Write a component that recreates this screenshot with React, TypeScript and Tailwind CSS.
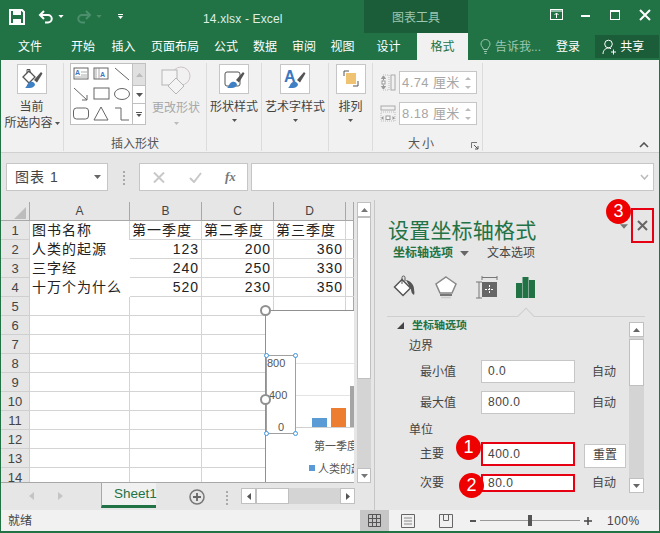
import React from "react";

function Save() {
  return (
    <svg width="16" height="16" viewBox="0 0 16 16">
      <path d="M1 1h12l2 2v12H1z" fill="none" stroke="#fff" strokeWidth="2" />
      <rect x="4" y="1" width="8" height="5" fill="#fff" />
      <rect x="4" y="10" width="8" height="5" fill="#fff" />
    </svg>
  );
}
function Undo({ c }: { c: string }) {
  return (
    <svg width="16" height="14" viewBox="0 0 16 14">
      <path d="M3 5h7a3.6 3.6 0 0 1 0 7.5H7" fill="none" stroke={c} strokeWidth="2" />
      <path d="M6 1L2 5l4 4" fill="none" stroke={c} strokeWidth="2" />
    </svg>
  );
}
function Redo({ c }: { c: string }) {
  return (
    <svg width="16" height="14" viewBox="0 0 16 14">
      <path d="M13 5H6a3.6 3.6 0 0 0 0 7.5h3" fill="none" stroke={c} strokeWidth="2" />
      <path d="M10 1l4 4-4 4" fill="none" stroke={c} strokeWidth="2" />
    </svg>
  );
}
function Caret({ c = "#555", w = 7 }: { c?: string; w?: number }) {
  return (
    <svg width={w} height={Math.round((w * 4) / 7)} viewBox="0 0 7 4" className="shrink-0">
      <path d="M0 0h7L3.5 4z" fill={c} />
    </svg>
  );
}
function Brush() {
  return (
    <g>
      <path d="M14 13l7-8 1.500 1.500-5.500 9z" fill="#555" />
      <path d="M5 21c2-1 2-5 5-6 3-1 5 1 5 3-1 2-3 3-5 3z" fill="#3f7fc4" />
    </g>
  );
}
function BigButton({ children }: { children: React.ReactNode }) {
  return (
    <div className="w-[30px] h-[30px] bg-white border border-[#c6c6c6] flex items-center justify-center">
      <svg width="24" height="24" viewBox="0 0 24 24">
        {children}
      </svg>
    </div>
  );
}

const shapeIcons = [
  <g key="a"><rect x="2" y="3" width="14" height="11" fill="none" stroke="#666" /><text x="3" y="10" fontSize="7" fill="#3a78c0" fontFamily="Liberation Sans" fontWeight="bold">A</text><path d="M9 7h6M9 10h6M3 12h12" stroke="#888" strokeWidth="0.7" /></g>,
  <g key="b"><rect x="2" y="3" width="14" height="11" fill="none" stroke="#666" /><text x="8" y="12" fontSize="7" fill="#3a78c0" fontFamily="Liberation Sans" fontWeight="bold">A</text><path d="M4 3v11M7 3v11" stroke="#888" strokeWidth="0.7" /></g>,
  <path key="c" d="M2 3l14 12" stroke="#666" fill="none" />,
  <g key="d"><path d="M2 3l13 12" stroke="#666" fill="none" /><path d="M15 10v5h-5" stroke="#666" fill="none" /></g>,
  <rect key="e" x="2" y="3" width="15" height="11" fill="none" stroke="#666" />,
  <ellipse key="f" cx="9" cy="9" rx="7.5" ry="5.5" fill="none" stroke="#666" />,
  <rect key="g" x="1.5" y="3" width="15" height="11" rx="3" fill="none" stroke="#666" />,
  <path key="h" d="M9 2l7 13H2z" fill="none" stroke="#666" />,
  <path key="i" d="M2 3h6v12h8" fill="none" stroke="#666" />,
];

const Tab = ({ w, t }: { w: string; t: string }) => (
  <div className={`${w} shrink-0 text-center`}>{t}</div>
);

function Spin({ text }: { text: string }) {
  return (
    <div className="w-[78px] h-[23px] bg-white border border-[#c6c6c6] flex items-center pl-[2px] text-[13px] tracking-[0.4px] text-[#a6a6a6]">
      <span className="flex-1 whitespace-nowrap">{text}</span>
      <div className="flex flex-col gap-[6px] mr-[5px]">
        <svg width="6" height="3"><path d="M0 3h6L3 0z" fill="#bbb" /></svg>
        <svg width="6" height="3"><path d="M0 0h6L3 3z" fill="#bbb" /></svg>
      </div>
    </div>
  );
}

const rowData: Record<number, string[]> = {
  1: ["图书名称", "第一季度", "第二季度", "第三季度"],
  2: ["人类的起源", "123", "200", "360"],
  3: ["三字经", "240", "250", "330"],
  4: ["十万个为什么", "520", "230", "350"],
};
const rows = Array.from({ length: 14 }, (_, i) => i + 1);

function Badge({ n, cls }: { n: string; cls: string }) {
  return (
    <div className={`absolute w-[25px] h-[25px] rounded-full bg-[#ee0000] text-white text-[18px] flex items-center justify-center ${cls}`}>
      {n}
    </div>
  );
}

function Handle({ cls }: { cls: string }) {
  return <div className={`absolute w-[5px] h-[5px] rounded-full bg-white border border-[#3d95e0] ${cls}`} />;
}

function PanelField({ label, value, right }: { label: string; value: string; right: string }) {
  return (
    <div className="flex items-center h-[23px] mb-[8px]">
      <div className="w-[72px] pl-[11px] text-[12px] text-[#444]">{label}</div>
      <div className="w-[94px] h-[23px] bg-white border border-[#c6c6c6] pl-[6px] text-[12px] tracking-[0.5px] text-[#444] leading-[20px]">{value}</div>
      <div className="ml-[17px] text-[12px] text-[#444]">{right}</div>
    </div>
  );
}

export default function App() {
  return (
    <div className="w-[660px] h-[533px] overflow-hidden relative flex flex-col bg-[#e6e6e6] border-x border-b-2 border-[#217346] font-['Liberation_Sans','Noto_Sans_CJK_SC',sans-serif] text-[#333]">
      {/* title bar */}
      <div className="h-[33px] shrink-0 bg-[#217346] flex text-white -mx-px">
        <div className="w-[364px] shrink-0 flex items-center pl-[9px] relative">
          <Save />
          <div className="ml-[13px]"><Undo c="#fff" /></div>
          <div className="ml-[4px]"><Caret c="#fff" w={6} /></div>
          <div className="ml-[12px]"><Redo c="#4b8f6c" /></div>
          <div className="ml-[4px]"><Caret c="#4b8f6c" w={6} /></div>
          <div className="ml-[16px] flex flex-col items-center gap-[1px]">
            <div className="w-[5px] h-px bg-white" />
            <Caret c="#fff" w={5} />
          </div>
          <div className="ml-[80px] mt-[4px] text-[12px] tracking-[0.15px] text-[#dfeee6] whitespace-nowrap">14.xlsx - Excel</div>
        </div>
        <div className="w-[104px] shrink-0 bg-[#1b5c39] text-center text-[12px] leading-[36px] text-[#9cc7b0]">图表工具</div>
        <div className="flex-1 flex items-center pl-[82px] gap-[18px] pb-[4px]">
          <svg width="13" height="11" viewBox="0 0 13 11"><rect x=".5" y=".5" width="12" height="10" fill="none" stroke="#fff" /><path d="M1 2h11" stroke="#fff" /><path d="M6.5 9V4M4.5 6l2-2 2 2" stroke="#fff" fill="none" /></svg>
          <div className="w-[9px] h-[2px] bg-white mt-[3px]" />
          <div className="w-[10px] h-[10px] border border-white border-t-2 ml-[2px]" />
          <svg width="12" height="12" viewBox="0 0 12 12" className="ml-px"><path d="M1 1l10 10M11 1L1 11" stroke="#fff" strokeWidth="2" /></svg>
        </div>
      </div>

      {/* tabs */}
      <div className="h-[27px] shrink-0 bg-[#217346] flex items-center text-[12px] text-white -mx-px">
        <Tab w="w-[60px]" t="文件" />
        <Tab w="w-[46px]" t="开始" />
        <Tab w="w-[35px]" t="插入" />
        <Tab w="w-[68px]" t="页面布局" />
        <Tab w="w-[34px]" t="公式" />
        <Tab w="w-[44px]" t="数据" />
        <Tab w="w-[34px]" t="审阅" />
        <Tab w="w-[43px]" t="视图" />
        <Tab w="w-[49px]" t="设计" />
        <div className="w-[51px] h-[27px] shrink-0 bg-[#f1f1f1] text-center leading-[28px] text-[#217346] ml-[4px]">格式</div>
        <div className="ml-[12px] flex items-center gap-[4px] text-[#9cc7b0] whitespace-nowrap w-[76px]">
          <svg width="11" height="15" viewBox="0 0 11 15"><path d="M3.5 10.5C3 8 1 7.500 1 5a4.500 4.500 0 0 1 9 0c0 2.500-2 3-2.500 5.500z" fill="none" stroke="#9cc7b0" /><path d="M4 12.500h3M4.500 14.500h2" stroke="#9cc7b0" /></svg>
          <span>告诉我...</span>
        </div>
        <div className="ml-[-1px] w-[36px] text-center">登录</div>
        <div className="ml-[10px] w-[68px] h-[23px] bg-[#1b5c39] flex items-center pl-[7px] gap-[3px]">
          <svg width="15" height="16" viewBox="0 0 15 16"><circle cx="6.500" cy="5" r="3.800" fill="none" stroke="#fff" /><path d="M1 15c0-3 2-6 5.500-6 1 0 1.500.2 2.500.7" fill="none" stroke="#fff" /><path d="M9 13h5M11.500 10.500v5" stroke="#fff" /></svg>
          <span>共享</span>
        </div>
      </div>

      {/* ribbon */}
      <div className="h-[93px] shrink-0 bg-[#f1f1f1] flex relative border-b border-[#d0d0d0] text-[12px] leading-[16px] text-[#444] -mx-px">
        <div className="w-[64px] shrink-0 h-[88px] mt-[3px] border-r border-[#dcdcdc] flex flex-col items-center pt-px">
          <BigButton>
            <path d="M3 10l6-6 6 6-6 6z" fill="#fff" stroke="#555" strokeWidth="1.300" />
            <path d="M7 6V2.500h3V6" fill="none" stroke="#555" />
            <Brush />
          </BigButton>
          <div className="mt-[5px]">当前</div>
          <div className="whitespace-nowrap flex items-center gap-[2px] ml-[1px]">所选内容<Caret w={5} /></div>
        </div>

        <div className="w-[143px] shrink-0 h-[88px] mt-[3px] border-r border-[#dcdcdc] flex flex-col">
          <div className="flex h-[63px]">
            <div className="ml-[6px] w-[76px] h-[62px] bg-white border border-[#c0c0c0] flex">
              <div className="w-[61px] grid grid-cols-3 justify-items-center items-center">
                {shapeIcons.map((s, i) => (
                  <svg key={i} width="18" height="18" viewBox="0 0 18 18">{s}</svg>
                ))}
              </div>
              <div className="flex-1 flex flex-col border-l border-[#c0c0c0]">
                <div className="h-[21px] bg-[#e0e0e0] flex items-center justify-center"><svg width="7" height="4"><path d="M0 4h7L3.500 0z" fill="#bbb" /></svg></div>
                <div className="h-[19px] border-y border-[#c0c0c0] flex items-center justify-center"><Caret /></div>
                <div className="flex-1 flex flex-col items-center justify-center gap-px"><div className="w-[6px] h-px bg-[#555]" /><Caret w={6} /></div>
              </div>
            </div>
            <div className="ml-[7px] mt-[2px] w-[46px] flex flex-col items-center text-[#a8a8a8] whitespace-nowrap">
              <svg width="32" height="31" viewBox="0 0 32 31">
                <circle cx="21" cy="11" r="9" fill="none" stroke="#d0c4c4" />
                <rect x="2" y="5" width="15" height="15" fill="#f4f4f4" stroke="#b5b5b5" />
                <path d="M16 13l8 8-8 8-8-8z" fill="#f4f4f4" stroke="#b5b5b5" />
              </svg>
              <div className="mt-[4px]">更改形状</div>
              <div className="mt-[6px]"><Caret c="#bbb" w={5} /></div>
            </div>
          </div>
          <div className="mt-[11px] text-center text-[#555]">插入形状</div>
        </div>

        <div className="w-[55px] shrink-0 h-[88px] mt-[3px] border-r border-[#dcdcdc] flex flex-col items-center pt-px">
          <BigButton>
            <rect x="3" y="5" width="15" height="14" rx="2" fill="#fff" stroke="#555" />
            <Brush />
          </BigButton>
          <div className="mt-[5px] whitespace-nowrap">形状样式</div>
          <div className="mt-[4px]"><Caret w={5} /></div>
        </div>

        <div className="w-[67px] shrink-0 h-[88px] mt-[3px] border-r border-[#dcdcdc] flex flex-col items-center pt-px">
          <BigButton>
            <text x="1" y="15" fontSize="16" fontWeight="bold" fill="#3a78c0" fontFamily="Liberation Sans">A</text>
            <Brush />
          </BigButton>
          <div className="mt-[5px] whitespace-nowrap">艺术字样式</div>
          <div className="mt-[4px]"><Caret w={5} /></div>
        </div>

        <div className="w-[44px] shrink-0 h-[88px] mt-[3px] border-r border-[#dcdcdc] flex flex-col items-center pt-px">
          <BigButton>
            <path d="M5 9V4h5M19 14v5h-5" fill="none" stroke="#555" />
            <rect x="7" y="6" width="10" height="11" fill="#f0c373" />
          </BigButton>
          <div className="mt-[5px]">排列</div>
          <div className="mt-[4px]"><Caret w={5} /></div>
        </div>

        <div className="w-[110px] shrink-0 h-[88px] mt-[3px] border-r border-[#dcdcdc] flex flex-col relative">
          <div className="flex items-center mt-[8px] gap-[3px] pl-[7px]">
            <svg width="16" height="17" viewBox="0 0 16 17">
              <rect x="11" y="1" width="4" height="15" fill="none" stroke="#aaa" />
              <rect x="3" y="1" width="6" height="15" fill="none" stroke="#bbb" strokeDasharray="1 1" />
              <path d="M3.500 6V3M1.500 4.500L3.500 2l2 2.500zM3.500 11v3M1.500 12.500l2 2.500 2-2.500z" fill="#999" stroke="#999" />
              <rect x="2" y="7" width="3" height="3" fill="#fff" stroke="#999" />
            </svg>
            <Spin text="4.74 厘米" />
          </div>
          <div className="flex items-center mt-[8px] gap-[3px] pl-[7px]">
            <svg width="16" height="17" viewBox="0 0 16 17">
              <rect x="1" y="1" width="14" height="4" fill="none" stroke="#aaa" />
              <rect x="1" y="7" width="14" height="9" fill="none" stroke="#bbb" strokeDasharray="1 1" />
              <path d="M1 13l2.500-2v4zM15 13l-2.500-2v4z" fill="#999" />
              <rect x="6" y="11" width="4" height="3.500" fill="#fff" stroke="#999" />
            </svg>
            <Spin text="8.18 厘米" />
          </div>
          <div className="mt-[11px] pl-[35px] text-[#555] tracking-[2px]">大小</div>
          <svg width="8" height="8" viewBox="0 0 8 8" className="absolute left-[98px] top-[79px]"><path d="M.5 6V.5H6" fill="none" stroke="#777" /><path d="M3 3l4 4M7 4v3H4" fill="none" stroke="#555" /></svg>
        </div>

        <svg width="10" height="6" viewBox="0 0 10 6" className="absolute left-[639px] top-[82px]"><path d="M1 5l4-4 4 4" fill="none" stroke="#555" strokeWidth="1.600" /></svg>
      </div>

      {/* formula bar */}
      <div className="h-[47px] shrink-0 bg-[#e6e6e6] flex items-start pt-[10px] -mx-px">
        <div className="ml-[6px] w-[102px] h-[28px] bg-white border border-[#c6c6c6] flex items-center pl-[8px] pr-[6px] text-[14px] tracking-[1px] text-[#444]">
          <span className="flex-1">图表 1</span>
          <Caret c="#666" />
        </div>
        <div className="ml-[15px] mt-[8px] flex flex-col gap-[2px]">
          <div className="w-[2px] h-[2px] bg-[#aaa]" />
          <div className="w-[2px] h-[2px] bg-[#aaa]" />
          <div className="w-[2px] h-[2px] bg-[#aaa]" />
          <div className="w-[2px] h-[2px] bg-[#aaa]" />
        </div>
        <div className="ml-[14px] w-[109px] h-[28px] bg-white border border-[#c6c6c6] flex items-center pl-[13px] gap-[24px]">
          <svg width="12" height="11" viewBox="0 0 12 11"><path d="M1 .5l10 10M11 .5l-10 10" stroke="#c8c8c8" strokeWidth="2" /></svg>
          <svg width="13" height="11" viewBox="0 0 13 11"><path d="M1 6l4 4 7-9" fill="none" stroke="#c8c8c8" strokeWidth="2" /></svg>
          <span className="font-['Liberation_Serif',serif] italic font-bold text-[13px] text-[#777] -ml-[1px]">fx</span>
        </div>
        <div className="ml-[3px] w-[403px] h-[28px] bg-white border border-[#c6c6c6] flex items-center justify-end pr-[4px]">
          <svg width="9" height="6" viewBox="0 0 9 6"><path d="M1 1l3.500 4L8 1" fill="none" stroke="#bbb" strokeWidth="1.500" /></svg>
        </div>
      </div>

      {/* main */}
      <div className="flex-1 min-h-0 flex -mr-px">
        <div className="w-[373px] shrink-0 flex flex-col relative">
          <div className="flex h-[283px] pt-[2px]">
            {/* sheet */}
            <div className="w-[353px] h-[281px] overflow-hidden relative border-b border-[#a8a8a8]">
              <div className="grid grid-cols-[29px_100px_72px_72px_72px_8px] grid-rows-[19px] auto-rows-[19px] text-[14px] tracking-[1px] text-[#222] bg-white leading-[19px] border-r border-[#a8a8a8]">
                <div className="h-[19px] bg-[#e6e6e6] border-r border-b border-[#a8a8a8] relative">
                  <svg width="12" height="12" className="absolute right-[3px] bottom-[1px]"><path d="M12 0v12H0z" fill="#bdbdbd" /></svg>
                </div>
                {["A", "B", "C", "D", ""].map((h, i) => (
                  <div key={i} className="h-[19px] bg-[#e6e6e6] border-r border-b border-[#a8a8a8] text-center text-[12px] tracking-normal text-[#444]">{h}</div>
                ))}
                {rows.map((r) => (
                  <React.Fragment key={r}>
                    <div className="bg-[#e6e6e6] border-r border-b border-[#cfcfcf] text-center text-[13px] tracking-normal text-[#444]">{r}</div>
                    {[0, 1, 2, 3].map((c) => {
                      const v = rowData[r]?.[c] ?? "";
                      const num = /^\d+$/.test(v);
                      const noB = r <= 4 && c === 0;
                      const noR = r >= 2 && r <= 4 && c === 0;
                      return (
                        <div key={c} className={`whitespace-nowrap px-[2px] ${num ? "text-right" : ""} ${noB ? "" : "border-b"} ${noR ? "" : "border-r"} border-[#d4d4d4]`}>
                          {v}
                        </div>
                      );
                    })}
                    <div className="border-b border-[#d4d4d4]" />
                  </React.Fragment>
                ))}
              </div>

              {/* chart */}
              <div className="absolute left-[264px] top-[108px] w-[100px] h-[190px] bg-white border border-[#909090] text-[11px] text-[#555]">
                <div className="absolute left-[30px] right-0 top-[52px] h-px bg-[#e4e4e4]" />
                <div className="absolute left-[30px] right-0 top-[84px] h-px bg-[#e4e4e4]" />
                <div className="absolute left-[30px] right-0 top-[116px] h-px bg-[#d0d0d0]" />
                <div className="absolute left-[46px] top-[107px] w-[15px] h-[9px] bg-[#5b9bd5]" />
                <div className="absolute left-[65px] top-[97px] w-[15px] h-[19px] bg-[#ed7d31]" />
                <div className="absolute left-[84px] top-[75px] w-[15px] h-[41px] bg-[#a5a5a5]" />
                <div className="absolute left-[48px] top-[127px] whitespace-nowrap">第一季度</div>
                <div className="absolute left-[43px] top-[154px] w-[6px] h-[6px] bg-[#5b9bd5]" />
                <div className="absolute left-[52px] top-[150px] whitespace-nowrap">人类的起源</div>
                {/* selected axis */}
                <div className="absolute left-0 top-[44px] w-[30px] h-[79px] border border-[#a0a0a0] text-[11px]">
                  <div className="absolute left-0 -top-px">800</div>
                  <div className="absolute left-[2px] top-[31px]">400</div>
                  <div className="absolute left-[11px] top-[63px]">0</div>
                </div>
                <Handle cls="-left-[2px] top-[42px]" />
                <Handle cls="left-[27px] top-[42px]" />
                <Handle cls="-left-[2px] top-[120px]" />
                <Handle cls="left-[27px] top-[120px]" />
                <div className="absolute -left-[6px] -top-[6px] w-[11px] h-[11px] rounded-full bg-white border-2 border-[#909090]" />
                <div className="absolute -left-[6px] top-[83px] w-[11px] h-[11px] rounded-full bg-white border-2 border-[#909090]" />
              </div>
            </div>
            {/* vscroll */}
            <div className="ml-[3px] w-[14px] h-[281px] flex flex-col">
              <div className="h-[15px] bg-white border border-[#c0c0c0] flex items-center justify-center"><svg width="7" height="4"><path d="M0 4h7L3.500 0z" fill="#777" /></svg></div>
              <div className="h-[162px] bg-white border border-[#c0c0c0]" />
              <div className="flex-1 bg-[#d4d4d4]" />
              <div className="h-[15px] bg-white border border-[#c0c0c0] flex items-center justify-center"><Caret c="#777" /></div>
            </div>
          </div>
          {/* sheet tabs */}
          <div className="h-[27px] shrink-0 flex items-start">
            <div className="ml-[28px] mt-[9px] flex gap-[24px]">
              <svg width="5" height="8"><path d="M5 0v8L0 4z" fill="#c4c4c4" /></svg>
              <svg width="5" height="8"><path d="M0 0v8l5-4z" fill="#c4c4c4" /></svg>
            </div>
            <div className="ml-[38px] w-[55px] h-[25px] bg-[#f1f1f1] border-l border-b-[3px] border-l-[#a8a8a8] border-b-[#217346] text-[13.5px] text-[#217346] pl-[12px] leading-[22px] whitespace-nowrap">Sheet1</div>
            <svg width="16" height="16" viewBox="0 0 16 16" className="ml-[33px] mt-[6px]"><circle cx="8" cy="8" r="7" fill="none" stroke="#777" strokeWidth="1.500" /><path d="M4 8h8M8 4v8" stroke="#666" strokeWidth="1.800" /></svg>
            <div className="ml-[21px] mt-[8px] flex flex-col gap-[2px]">
              <div className="w-[2px] h-[2px] bg-[#aaa]" />
              <div className="w-[2px] h-[2px] bg-[#aaa]" />
              <div className="w-[2px] h-[2px] bg-[#aaa]" />
              <div className="w-[2px] h-[2px] bg-[#aaa]" />
            </div>
            <div className="ml-[13px] mt-[5px] w-[114px] h-[16px] bg-[#d4d4d4] flex">
              <div className="w-[15px] bg-white border border-[#c0c0c0] flex items-center justify-center"><svg width="4" height="7"><path d="M4 0v7L0 3.500z" fill="#555" /></svg></div>
              <div className="w-[33px] bg-white border border-[#c0c0c0]" />
              <div className="flex-1" />
              <div className="w-[15px] bg-white border border-[#c0c0c0] flex items-center justify-center"><svg width="4" height="7"><path d="M0 0v7l4-3.500z" fill="#555" /></svg></div>
            </div>
          </div>
        </div>

        {/* panel */}
        <div className="flex-1 border-l border-[#c6c6c6] bg-[#e6e6e6] relative pl-[13px] pt-[16px] min-w-0">
          <div className="text-[21px] leading-[30px] text-[#217346] tracking-[0.2px] whitespace-nowrap">设置坐标轴格式</div>
          <div className="flex items-center text-[12px] leading-[18px] -mt-[4px] h-[22px]">
            <span className="font-bold text-[#217346] text-[12px] ml-[5px]">坐标轴选项</span>
            <span className="ml-[7px]"><Caret c="#666" w={9} /></span>
            <span className="ml-[18px] text-[#444]">文本选项</span>
          </div>
          <div className="flex items-center h-[30px] mt-[8px] ml-[5px]">
            <svg width="24" height="24" viewBox="0 0 24 24">
              <path d="M1.500 12L9 4.500 17.500 13 10 20.500z" fill="#fff" stroke="#555" strokeWidth="1.500" />
              <path d="M9 9V2.500a1.500 1.500 0 0 1 3 0V6" fill="none" stroke="#555" />
              <path d="M13 5c5 1 8 5 8 9 0 2 1 3 0 6-2-1-3-3-3-6z" fill="#555" />
            </svg>
            <svg width="24" height="24" viewBox="0 0 24 24" className="ml-[17px]">
              <path d="M12 2l10 7-4 9H6L2 9z" fill="#fff" stroke="#888" strokeWidth="1.500" />
              <path d="M6 20h12" stroke="#777" strokeWidth="2" />
              <path d="M7 22.500h10" stroke="#ccc" strokeWidth="1.500" />
            </svg>
            <svg width="24" height="24" viewBox="0 0 24 24" className="ml-[17px]">
              <path d="M7 2.500h15M7 1v4M22 1v4M4 7v16M1 7h6M1 23h6" stroke="#777" fill="none" />
              <rect x="7" y="7" width="15" height="15" fill="#666" />
              <path d="M14.500 10v9M10 14.500h9" stroke="#fff" strokeDasharray="2 1" />
            </svg>
            <svg width="22" height="22" viewBox="0 0 22 22" className="ml-[16px]"><rect x="1" y="7" width="6" height="15" fill="#217346" /><rect x="7.500" y="1" width="6" height="21" fill="#217346" /><rect x="14" y="4" width="6" height="18" fill="#217346" /></svg>
          </div>
          <div className="relative h-[10px] -ml-px w-[258px] mt-[7px]">
            <div className="absolute left-0 right-0 top-[7px] h-px bg-[#cfcfcf]" />
            <div className="absolute left-[133px] top-[1px] w-[12px] h-[12px] rotate-45 bg-[#e6e6e6] border-l border-t border-[#cfcfcf]" />
          </div>

          {/* scroll content */}
          <div className="absolute left-[13px] top-[120px] w-[258px] h-[190px] overflow-hidden">
            <div className="absolute left-[9px] -top-[3px] flex items-center">
              <svg width="7" height="7"><path d="M7 0v7H0z" fill="#444" /></svg>
              <span className="ml-[8px] text-[11px] font-bold text-[#217346]">坐标轴选项</span>
            </div>
            <div className="pl-[21px] pt-[16px]">
              <div className="text-[12px] leading-[20px] text-[#444] mb-[4px]">边界</div>
              <PanelField label="最小值" value="0.0" right="自动" />
              <PanelField label="最大值" value="800.0" right="自动" />
              <div className="text-[12px] leading-[18px] text-[#444] -mt-[1px] mb-[3px]">单位</div>
              <div className="flex items-center h-[24px] mb-[8px]">
                <div className="w-[72px] pl-[11px] text-[12px] text-[#444]">主要</div>
                <div className="w-[94px] h-[24px] bg-white border-2 border-[#e60012] pl-[5px] text-[12px] tracking-[0.5px] text-[#444] leading-[20px]">400.0</div>
                <div className="ml-[9px] mt-[4px] w-[42px] h-[24px] bg-white border border-[#c6c6c6] text-center text-[12px] leading-[21px] text-[#444]">重置</div>
              </div>
              <div className="flex items-center h-[18px]">
                <div className="w-[72px] pl-[11px] text-[12px] text-[#444]">次要</div>
                <div className="w-[94px] h-[18px] bg-white border-2 border-[#e60012] pl-[5px] text-[12px] tracking-[0.5px] text-[#444] leading-[14px]">80.0</div>
                <div className="ml-[17px] text-[12px] text-[#444]">自动</div>
              </div>
            </div>
            {/* panel scrollbar */}
            <div className="absolute left-[241px] top-[2px] w-[15px] h-[171px] flex flex-col bg-[#d4d4d4]">
              <div className="h-[15px] bg-white border border-[#c0c0c0] flex items-center justify-center"><svg width="7" height="4"><path d="M0 4h7L3.500 0z" fill="#666" /></svg></div>
              <div className="h-[47px] mt-[2px] bg-white border border-[#c0c0c0]" />
              <div className="flex-1" />
              <div className="h-[15px] bg-white border border-[#c0c0c0] flex items-center justify-center"><Caret c="#666" /></div>
            </div>
          </div>

          {/* close */}
          <div className="absolute left-[245px] top-[24px]"><Caret c="#777" w={8} /></div>
          <div className="absolute left-[256px] top-[8px] w-[23px] h-[35px] border-2 border-[#e60012] flex items-center justify-center">
            <svg width="11" height="11" viewBox="0 0 11 11"><path d="M1 1l9 9M10 1l-9 9" stroke="#666" strokeWidth="2" /></svg>
          </div>
          <Badge n="3" cls="left-[231px] -top-px" />
          <Badge n="1" cls="left-[81px] top-[235px]" />
          <Badge n="2" cls="left-[84px] top-[273px]" />
        </div>
      </div>

      {/* status */}
      <div className="h-[21px] shrink-0 bg-[#f1f1f1] flex items-center text-[12px] text-[#444] -mx-px">
        <div className="w-[360px] pl-[8px]">就绪</div>
        <div className="w-[29px] h-[21px] bg-[#c6c6c6] flex items-center justify-center">
          <svg width="13" height="13" viewBox="0 0 13 13"><path d="M.5.5h12v12H.5zM.5 4.500h12M.5 8.500h12M4.500.5v12M8.500.5v12" fill="none" stroke="#555" /></svg>
        </div>
        <svg width="14" height="14" viewBox="0 0 14 14" className="ml-[12px]"><path d="M.5.5h13v13H.5z" fill="none" stroke="#666" /><path d="M3 4h8M3 7h8M3 10h8" stroke="#888" /></svg>
        <svg width="14" height="14" viewBox="0 0 14 14" className="ml-[24px]"><path d="M.5.5h13v13H.5z" fill="none" stroke="#666" /><path d="M4.500.5v6h5v-6" fill="none" stroke="#666" /></svg>
        <div className="ml-[17px] w-[6px] h-[2px] bg-[#555]" />
        <div className="ml-[4px] w-[100px] h-px bg-[#999] relative">
          <div className="absolute left-[48px] -top-[5px] w-[4px] h-[11px] bg-[#555]" />
        </div>
        <svg width="8" height="8" className="ml-[4px]"><path d="M4 0v8M0 4h8" stroke="#444" strokeWidth="1.500" /></svg>
        <span className="ml-[15px] tracking-[0.5px]">100%</span>
      </div>
    </div>
  );
}
